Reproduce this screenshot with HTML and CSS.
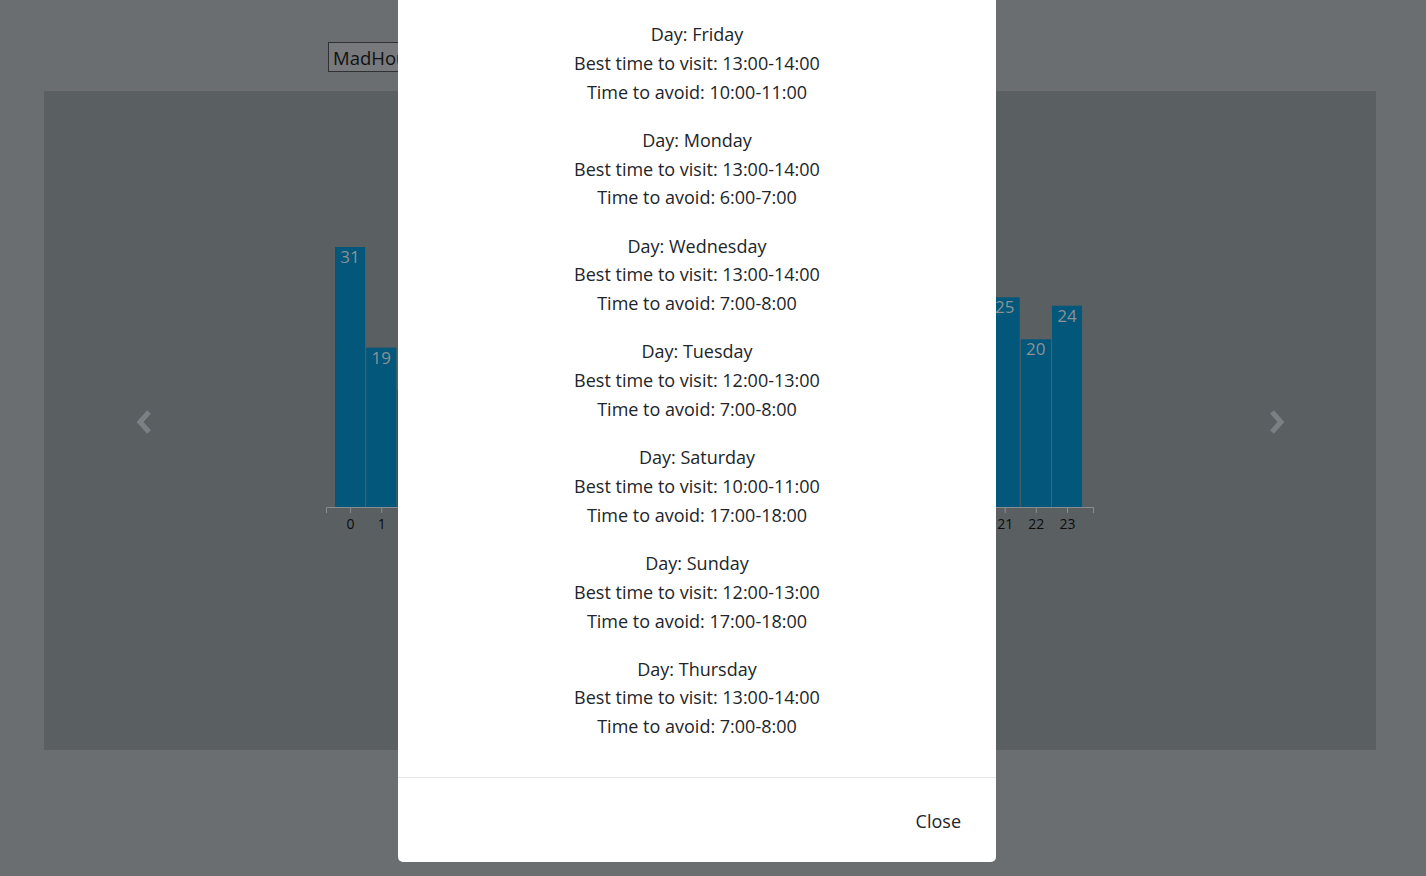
FILE: index.html
```html
<!DOCTYPE html>
<html lang="en">
<head>
<meta charset="utf-8">
<title>Best times</title>
<link rel="stylesheet" href="styles.css">
</head>
<body>
<main class="page">
  <div class="toolbar">
    <select class="place-select"><option>MadHouse Coffee</option></select>
  </div>
  <section class="chart-panel">
    <button class="nav nav-prev" aria-label="Previous">
      <svg width="20" height="26" viewBox="0 0 20 26"><polyline points="14,3 5,13 14,23" fill="none" stroke="#7b8084" stroke-width="5"/></svg>
    </button>
    <svg class="chart" width="1332" height="659" viewBox="0 0 1332 659" id="chart"></svg>
    <button class="nav nav-next" aria-label="Next">
      <svg width="20" height="26" viewBox="0 0 20 26"><polyline points="6,3 15,13 6,23" fill="none" stroke="#7b8084" stroke-width="5"/></svg>
    </button>
  </section>
</main>
<div class="backdrop">
  <div class="modal">
    <div class="modal-body">
      <div class="day"><div class="line">Day: Friday</div><div class="line">Best time to visit: 13:00-14:00</div><div class="line">Time to avoid: 10:00-11:00</div></div>
      <div class="day"><div class="line">Day: Monday</div><div class="line">Best time to visit: 13:00-14:00</div><div class="line">Time to avoid: 6:00-7:00</div></div>
      <div class="day"><div class="line">Day: Wednesday</div><div class="line">Best time to visit: 13:00-14:00</div><div class="line">Time to avoid: 7:00-8:00</div></div>
      <div class="day"><div class="line">Day: Tuesday</div><div class="line">Best time to visit: 12:00-13:00</div><div class="line">Time to avoid: 7:00-8:00</div></div>
      <div class="day"><div class="line">Day: Saturday</div><div class="line">Best time to visit: 10:00-11:00</div><div class="line">Time to avoid: 17:00-18:00</div></div>
      <div class="day"><div class="line">Day: Sunday</div><div class="line">Best time to visit: 12:00-13:00</div><div class="line">Time to avoid: 17:00-18:00</div></div>
      <div class="day"><div class="line">Day: Thursday</div><div class="line">Best time to visit: 13:00-14:00</div><div class="line">Time to avoid: 7:00-8:00</div></div>
    </div>
    <div class="modal-footer">
      <button class="close-btn">Close</button>
    </div>
  </div>
</div>
<script src="chart.js"></script>
</body>
</html>
```
FILE: chart.js
```js
(function () {
  var values = [31, 19, 14, 10, 8, 12, 16, 22, 28, 33, 36, 38, 40, 42, 39, 35, 34, 33, 30, 27, 26, 25, 20, 24];
  var svg = document.getElementById('chart');
  var ns = 'http://www.w3.org/2000/svg';
  var x0 = 291, base = 416, step = 31.17, scale = 260 / 31;
  function el(name, attrs, text) {
    var e = document.createElementNS(ns, name);
    for (var k in attrs) e.setAttribute(k, attrs[k]);
    if (text !== undefined) e.textContent = text;
    svg.appendChild(e);
    return e;
  }
  values.forEach(function (v, i) {
    var h = v * scale;
    var x = x0 + i * step;
    el('rect', { x: x.toFixed(2), y: (base - h).toFixed(2), width: (step - 1).toFixed(2), height: h.toFixed(2), 'class': 'bar' });
    el('text', { x: (x + step / 2 - 0.5).toFixed(2), y: (base - h + 16).toFixed(2), 'class': 'bar-label' }, String(v));
    el('line', { x1: (x + step / 2).toFixed(2), y1: base, x2: (x + step / 2).toFixed(2), y2: base + 6, 'class': 'axis' });
    el('text', { x: (x + step / 2).toFixed(2), y: base + 22, 'class': 'tick-label' }, String(i));
  });
  el('path', { d: 'M282.5,422 V416.5 H1049.5 V422', 'class': 'axis', fill: 'none' });
})();
```
FILE: styles.css
```css
html, body {
  margin: 0;
  padding: 0;
}
body {
  background: #6b6e71;
  font-family: "Open Sans", "Noto Sans", sans-serif;
  width: 1426px;
  height: 876px;
  overflow: hidden;
  position: relative;
}
.page {
  padding: 42px 50px 0 44px;
}
.toolbar {
  padding-left: 284px;
  height: 49px;
}
.place-select {
  height: 30px;
  width: 200px;
  background: #77797c;
  border: 1px solid #2f3133;
  color: #111;
  font-family: "Open Sans", sans-serif;
  font-size: 18.5px;
  padding: 0 4px;
  appearance: none;
  -webkit-appearance: none;
  border-radius: 0;
}
.chart-panel {
  width: 1332px;
  height: 659px;
  background: #5a6062;
  position: relative;
}
.chart {
  display: block;
}
.bar {
  fill: #02577a;
}
.bar-label {
  fill: #8b9195;
  font-family: "Open Sans", sans-serif;
  font-size: 17px;
  text-anchor: middle;
}
.tick-label {
  fill: #0c0c0c;
  font-family: "Open Sans", sans-serif;
  font-size: 14px;
  text-anchor: middle;
}
.axis {
  stroke: #8a8d8f;
  stroke-width: 1;
}
.nav {
  position: absolute;
  top: 318px;
  background: none;
  border: 0;
  padding: 0;
  width: 20px;
  height: 26px;
}
.nav-prev { left: 91px; }
.nav-next { left: 1222px; }
.backdrop {
  position: absolute;
  inset: 0;
}
.modal {
  position: absolute;
  left: 398px;
  top: 0;
  width: 598px;
  height: 862px;
  background: #fff;
  border-radius: 0 0 5px 5px;
  display: flex;
  flex-direction: column;
}
.modal-body {
  padding: 20px 16px 0;
  height: 778px;
  flex: none;
  text-align: center;
  color: #212529;
  font-size: 18px;
  line-height: 28.8px;
  box-sizing: border-box;
  border-bottom: 1px solid #e4e6e8;
}
.day {
  margin: 0 0 19.4px;
}
.modal-footer {
  flex: 1;
  display: flex;
  justify-content: flex-end;
  align-items: center;
  padding: 0 35px 0 0;
}
.close-btn {
  background: none;
  border: 0;
  padding: 0;
  margin-top: 2px;
  font-family: "Open Sans", sans-serif;
  font-size: 18px;
  color: #212529;
}
```
